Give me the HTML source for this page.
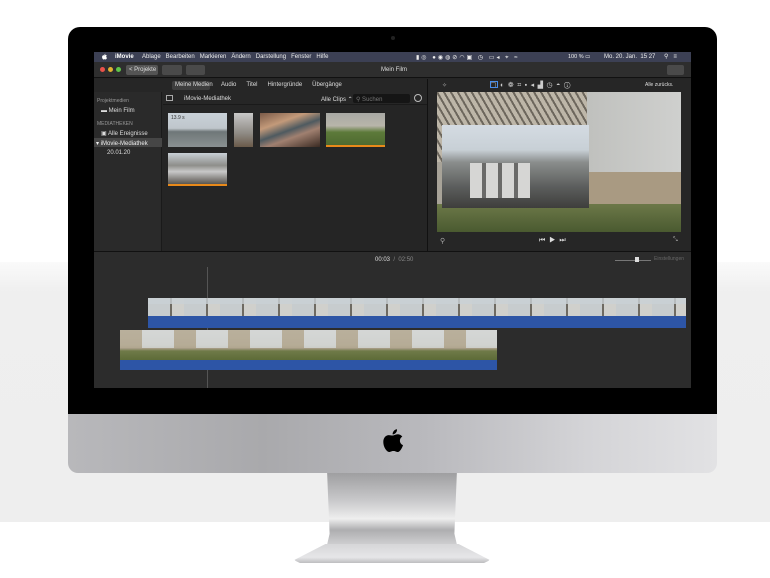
<!DOCTYPE html>
<html><head><meta charset="utf-8"><style>
*{margin:0;padding:0;box-sizing:border-box}
body{width:770px;height:578px;position:relative;overflow:hidden;background:#fff;font-family:"Liberation Sans",sans-serif}
.a{position:absolute}
.t{position:absolute;font-size:6px;color:#ccc;white-space:nowrap}
</style></head><body>
<div class="a" style="left:0;top:262px;width:770px;height:260px;background:linear-gradient(#fafafa,#efefef 30px,#eeeeee)"></div>
<!-- stand -->
<div class="a" style="left:327px;top:470px;width:130px;height:75px;background:linear-gradient(#9a9a9c,#c8c8ca 40%,#eeeeee 65%,#aeaeb0 80%,#d0d0d2);clip-path:polygon(0 0,100% 0,98% 85%,100% 100%,0 100%,2% 85%)"></div>
<div class="a" style="left:294px;top:544px;width:196px;height:19px;background:linear-gradient(#d6d6d8,#e6e6e8 70%,#bdbdbf);clip-path:polygon(16% 0,84% 0,100% 85%,97% 100%,3% 100%,0 85%);border-radius:0 0 6px 6px"></div>
<!-- chin -->
<div class="a" style="left:68px;top:410px;width:649px;height:63px;border-radius:0 0 10px 10px;background:linear-gradient(90deg,#b8b8bb,#a9a9ac 30%,#b9b9bd 55%,#d4d4d7 80%,#e2e2e4)"></div>
<svg class="a" style="left:379px;top:426px" width="28" height="32" viewBox="0 0 28 32"><path d="M13.5 9.5c1.5 0 3-1.3 5.2-1.3 1.4 0 3.3.6 4.6 2.4-3.6 2-3 7.2.7 8.5-.7 2.4-3 6.9-5.2 6.9-1.8 0-2.2-1-4.3-1-2.2 0-2.8 1-4.4 1-2.4 0-5.8-4.9-5.8-10 0-4.5 2.8-6.9 5.4-6.9 1.7 0 2.800.4 3.8.4z" fill="#000"/><path d="M13.6 8.4c-.2-2.6 1.9-5 4.4-5.2.3 2.7-2.1 5.2-4.4 5.2z" fill="#000"/></svg>
<!-- bezel -->
<div class="a" style="left:68px;top:27px;width:649px;height:387px;background:#000;border-radius:12px 12px 0 0"></div>
<div class="a" style="left:391px;top:36px;width:4px;height:4px;border-radius:50%;background:#222"></div>
<!-- screen -->
<div class="a" style="left:94px;top:52px;width:597px;height:336px;background:#252525;overflow:hidden">
 <div class="a" style="left:0;top:0;width:597px;height:10px;background:#3c4054"></div>
 <svg class="a" style="left:7px;top:1px" width="7" height="8" viewBox="0 0 28 32"><path d="M13.5 9.5c1.5 0 3-1.3 5.2-1.3 1.4 0 3.3.6 4.6 2.4-3.600 2-3 7.2.7 8.5-.7 2.4-3 6.9-5.2 6.9-1.8 0-2.2-1-4.3-1-2.2 0-2.8 1-4.4 1-2.4 0-5.8-4.9-5.8-10 0-4.5 2.8-6.9 5.400-6.9 1.7 0 2.8.4 3.8.4zM13.6 8.4c-.2-2.6 1.9-5 4.4-5.2.3 2.7-2.1 5.2-4.4 5.2z" fill="#fff"/></svg>
 <div class="t" style="left:21px;top:2px;color:#fff;font-weight:bold">iMovie</div>
 <div class="t" style="left:48px;top:2px;color:#eee">Ablage&nbsp;&nbsp;&nbsp;Bearbeiten&nbsp;&nbsp;&nbsp;Markieren&nbsp;&nbsp;&nbsp;Ändern&nbsp;&nbsp;&nbsp;Darstellung&nbsp;&nbsp;&nbsp;Fenster&nbsp;&nbsp;&nbsp;Hilfe</div>
 <div class="t" style="left:322px;top:2px;color:#eee;letter-spacing:2px">▮◎ ●◉◍⊘◠▣ ◷ ▭◂ ⌖ ≈</div>
 <div class="t" style="left:474px;top:2px;color:#eee;font-size:5.5px">100 % ▭</div>
 <div class="t" style="left:510px;top:2px;color:#eee">Mo. 20. Jan.&nbsp; 15 27</div>
 <div class="t" style="left:570px;top:1px;color:#eee">⚲&nbsp;&nbsp; ≡</div>
 <!-- toolbar -->
 <div class="a" style="left:0;top:10px;width:597px;height:16px;background:#2e2e2e;border-bottom:1px solid #111"></div>
 <div class="a" style="left:6px;top:15px;width:5px;height:5px;border-radius:50%;background:#e9524a"></div>
 <div class="a" style="left:14px;top:15px;width:5px;height:5px;border-radius:50%;background:#e0b132"></div>
 <div class="a" style="left:22px;top:15px;width:5px;height:5px;border-radius:50%;background:#5ec54a"></div>
 <div class="a" style="left:32px;top:13px;width:32px;height:10px;background:#545454;border-radius:2px"></div><div class="t" style="left:35px;top:15px;color:#ddd">&lt; Projekte</div>
 <div class="a" style="left:68px;top:13px;width:20px;height:10px;background:#4a4a4a;border-radius:2px"></div>
 <div class="a" style="left:92px;top:13px;width:19px;height:10px;background:#4a4a4a;border-radius:2px"></div>
 <div class="t" style="left:287px;top:15px;color:#ddd">Mein Film</div>
 <div class="a" style="left:573px;top:13px;width:17px;height:10px;background:#4a4a4a;border-radius:2px"></div>
 <!-- tabs -->
 <div class="a" style="left:0;top:27px;width:333px;height:13px;background:#262626"></div>
 <div class="a" style="left:78px;top:29px;width:38px;height:9px;background:#3e3e3e;border-radius:2px"></div>
 <div class="t" style="left:81px;top:30px;color:#ddd">Meine Medien&nbsp;&nbsp;&nbsp;&nbsp;&nbsp;Audio&nbsp;&nbsp;&nbsp;&nbsp;&nbsp;&nbsp;Titel&nbsp;&nbsp;&nbsp;&nbsp;&nbsp;&nbsp;Hintergründe&nbsp;&nbsp;&nbsp;&nbsp;&nbsp;&nbsp;Übergänge</div>
 <!-- sidebar -->
 <div class="a" style="left:0;top:40px;width:68px;height:159px;background:#2a2a2a;border-right:1px solid #1a1a1a"></div>
 <div class="t" style="left:3px;top:46px;font-size:5px;color:#999">Projektmedien</div>
 <div class="t" style="left:7px;top:56px;color:#ddd">▬ Mein Film</div>
 <div class="t" style="left:3px;top:69px;font-size:5px;color:#999">MEDIATHEKEN</div>
 <div class="t" style="left:7px;top:78px;color:#ddd">▣ Alle Ereignisse</div>
 <div class="a" style="left:0;top:86px;width:68px;height:9px;background:#464646"></div>
 <div class="t" style="left:2px;top:88px;color:#eee">▾ iMovie-Mediathek</div>
 <div class="t" style="left:13px;top:98px;color:#ddd">20.01.20</div>
 <!-- browser -->
 <div class="a" style="left:69px;top:40px;width:264px;height:13px;background:#262626;border-bottom:1px solid #1a1a1a"></div>
 <div class="a" style="left:72px;top:43px;width:7px;height:6px;border:1px solid #aaa"></div>
 <div class="t" style="left:90px;top:44px;color:#ddd">iMovie-Mediathek</div>
 <div class="t" style="left:227px;top:44px;color:#ddd">Alle Clips ⌃</div>
 <div class="a" style="left:259px;top:42px;width:57px;height:9px;background:#151515;border-radius:2px"></div>
 <div class="t" style="left:262px;top:44px;color:#777">⚲ Suchen</div>
 <div class="a" style="left:320px;top:42px;width:8px;height:8px;border:1px solid #bbb;border-radius:50%"></div>
 <div class="a" style="left:74px;top:61px;width:59px;height:34px;background:linear-gradient(#c9d1d8 0,#bfc6cc 45%,#6f7778 55%,#8a9192)"></div>
 <div class="t" style="left:77px;top:63px;font-size:5px;color:#333">13.9 s</div>
 <div class="a" style="left:140px;top:61px;width:19px;height:34px;background:linear-gradient(#c8c8c8,#8e8a84 60%,#6a5a4a)"></div>
 <div class="a" style="left:166px;top:61px;width:60px;height:34px;background:linear-gradient(160deg,#7a5a48,#c39a7a 30%,#4e5a60 50%,#a08070 65%,#3a2a22)"></div>
 <div class="a" style="left:232px;top:61px;width:59px;height:34px;background:linear-gradient(#a8a8a4,#b8b5aa 40%,#5d7a3a 60%,#4e6a30);border-bottom:2px solid #e8891a"></div>
 <div class="a" style="left:74px;top:101px;width:59px;height:33px;background:linear-gradient(#c9d0d6,#8e8e8a 40%,#c8c8c8 60%,#5a5650);border-bottom:2px solid #e8891a"></div>
 <!-- viewer -->
 <div class="a" style="left:333px;top:27px;width:264px;height:172px;background:#262626;border-left:1px solid #111"></div>
 <div class="t" style="left:348px;top:30px;color:#aaa">✧</div>
 <div class="t" style="left:396px;top:29px;color:#ccc;letter-spacing:3.5px;font-size:7px">▢◐❁⌗▪◂▟◷◓ⓘ</div>
 <div class="a" style="left:396px;top:29px;width:8px;height:7px;border:1px solid #4a8de8"></div>
 <div class="t" style="left:551px;top:30px;color:#ddd;font-size:5px">Alle zurücks.</div>
 <div class="a" style="left:343px;top:40px;width:244px;height:140px;background:linear-gradient(90deg,#a7a297,#c8c3b8 40%,#bfc0bd 60%,#cfd0ce);overflow:hidden">
  <div class="a" style="left:0;top:0;width:150px;height:70px;background:repeating-linear-gradient(60deg,#bdb6a8 0 4px,#6d675d 4px 6px)"></div>
  <div class="a" style="left:0;top:112px;width:244px;height:28px;background:linear-gradient(#6c7848,#4a5a30)"></div>
  <div class="a" style="left:152px;top:80px;width:92px;height:32px;background:#a99a82"></div>
  <div class="a" style="left:5px;top:33px;width:147px;height:83px;background:linear-gradient(#d4dbe2 0,#c8d0d6 30%,#8a8d8c 45%,#5b5d5c 75%,#3e3e3c)">
   <div class="a" style="left:28px;top:38px;width:60px;height:35px;background:repeating-linear-gradient(90deg,#d6d6d4 0 12px,#6a6a68 12px 16px)"></div>
  </div>
 </div>
 <div class="t" style="left:346px;top:185px;color:#aaa;font-size:7px">⚲</div>
 <div class="t" style="left:445px;top:185px;color:#ddd;font-size:7px">⏮&nbsp; ▶&nbsp; ⏭</div>
 <div class="t" style="left:579px;top:185px;color:#bbb">⤡</div>
 <!-- timeline -->
 <div class="a" style="left:0;top:199px;width:597px;height:137px;background:#2c2c2c;border-top:1px solid #111"></div>
 <div class="t" style="left:281px;top:205px;color:#ddd">00:03&nbsp; <span style="color:#888">/&nbsp; 02:50</span></div>
 <div class="a" style="left:521px;top:208px;width:36px;height:1px;background:#777"></div>
 <div class="a" style="left:541px;top:205px;width:4px;height:5px;background:#ddd"></div>
 <div class="t" style="left:560px;top:204px;color:#666;font-size:5px">Einstellungen</div>
 <div class="a" style="left:113px;top:215px;width:1px;height:121px;background:#555"></div>
 <div class="a" style="left:54px;top:246px;width:538px;height:18px;background:repeating-linear-gradient(90deg,#c7ccce 0 22px,#6e6a62 22px 24px,#d0d0cc 24px 36px);"></div>
 <div class="a" style="left:54px;top:246px;width:538px;height:6px;background:#c9d1d6;opacity:.8"></div>
 <div class="a" style="left:54px;top:264px;width:538px;height:12px;background:#2d55a6"></div>
 <div class="a" style="left:26px;top:278px;width:377px;height:30px;background:linear-gradient(#c9c7bf 0,#bcb7aa 50%,#a39a82 62%,#6f7a48 70%,#5d6b38)"></div>
 <div class="a" style="left:26px;top:278px;width:377px;height:18px;background:repeating-linear-gradient(90deg,#b4a890 0 22px,#d8dcdd 22px 54px);opacity:.75"></div>
 <div class="a" style="left:26px;top:308px;width:377px;height:10px;background:#2d55a6"></div>
</div>
</body></html>
